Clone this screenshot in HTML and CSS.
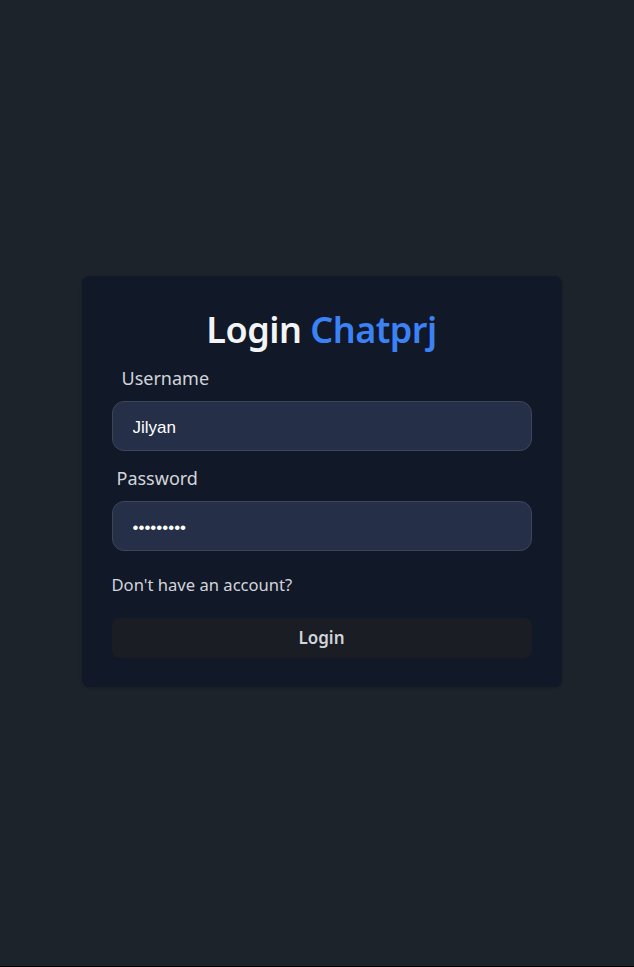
FILE: index.html
```html
<!DOCTYPE html>
<html lang="en">
<head>
<meta charset="utf-8">
<title>Login Chatprj</title>
<link rel="stylesheet" href="styles.css">
</head>
<body>
<main class="page">
  <form class="card">
    <h1 class="title">Login <span class="brand">Chatprj</span></h1>
    <label class="label label-user" for="username">Username</label>
    <input class="input" id="username" type="text" value="Jilyan">
    <label class="label label-pass" for="password">Password</label>
    <input class="input" id="password" type="password" value="123456789">
    <p class="signup">Don't have an account?</p>
    <button class="btn" type="button">Login</button>
  </form>
</main>
</body>
</html>
```

FILE: styles.css
```css
html {
  background: #000;
}
body {
  margin: 0;
  background: #1d232a;
  font-family: "Noto Sans", "Open Sans", sans-serif;
}
.page {
  height: 966px;
  display: flex;
  align-items: center;
  justify-content: center;
  box-sizing: border-box;
  padding: 0 0 4px 9px;
}
.card {
  width: 480px;
  box-sizing: border-box;
  padding: 34px 30px 29px;
  background: #111827;
  border-radius: 8px;
  display: flex;
  flex-direction: column;
  box-shadow: 0 1px 3px rgba(0,0,0,0.2);
}
.title {
  margin: 0;
  text-align: center;
  font-size: 36px;
  line-height: 40px;
  font-weight: 600;
  letter-spacing: -0.5px;
  color: #f3f4f6;
}
.brand {
  color: #3b82f6;
}
.label {
  font-size: 18px;
  line-height: 28px;
  color: #d1d5db;
}
.label-user {
  margin: 14px 0 9px 10px;
}
.label-pass {
  margin: 13px 0 9px 5px;
}
.input {
  height: 50px;
  box-sizing: border-box;
  border: 1px solid #3d4659;
  border-radius: 12px;
  background: #253048;
  color: #fff;
  padding: 5px 20px 0;
  font-family: "Liberation Sans", Arial, sans-serif;
  font-size: 17px;
  outline: none;
}
.signup {
  margin: 20px 0 0;
  font-size: 16.6px;
  line-height: 28px;
  color: #d1d5db;
}
.btn {
  margin-top: 19px;
  height: 40px;
  border: none;
  border-radius: 8px;
  background: #1a1d24;
  color: #d1d5db;
  font-family: "Noto Sans", "Open Sans", sans-serif;
  font-size: 17px;
  font-weight: 600;
}
```
